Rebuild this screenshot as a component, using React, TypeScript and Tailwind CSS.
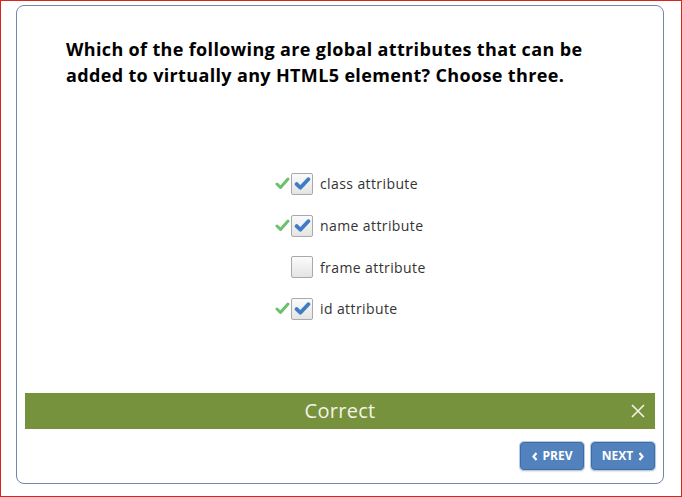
import React from 'react';

const options = [
  { label: 'class attribute', checked: true },
  { label: 'name attribute', checked: true },
  { label: 'frame attribute', checked: false },
  { label: 'id attribute', checked: true },
];

const GreenTick = () => (
  <svg width="15" height="13" viewBox="0 0 15 13">
    <path d="M2 7 L5.5 10.5 L13 2" fill="none" stroke="#6cc16c" strokeWidth="3" strokeLinecap="round" strokeLinejoin="round" />
  </svg>
);

const BlueTick = () => (
  <svg width="17" height="15" viewBox="0 0 16 14">
    <path d="M2.5 7.5 L6 11 L13.5 3" fill="none" stroke="#3f7cc6" strokeWidth="3.6" strokeLinecap="round" strokeLinejoin="round" />
  </svg>
);

const OptionRow: React.FC<{ label: string; checked: boolean }> = ({ label, checked }) => (
  <div className="flex h-[41.7px] items-center">
    <div className="flex w-[16px] justify-start">{checked && <GreenTick />}</div>
    <div className="flex h-[22px] w-[22px] items-center justify-center rounded-[2px] border border-[#a9a9a9] bg-gradient-to-b from-[#fbfbfb] to-[#e4e4e4]">
      {checked && <BlueTick />}
    </div>
    <span className="ml-[7px] text-[14px] tracking-[0.4px] text-[#333]">{label}</span>
  </div>
);

const NavButton: React.FC<{ children: React.ReactNode }> = ({ children }) => (
  <button className="flex h-[28px] w-[64px] items-center justify-center gap-[5px] rounded-[4px] border border-[#3d6da6] bg-[#5282be] text-[12px] font-bold text-white shadow-[0_0_0_1px_#b9cbe2,0_1px_2px_rgba(0,0,0,0.3)]">
    {children}
  </button>
);

const Chevron = ({ dir }: { dir: 'left' | 'right' }) => (
  <svg width="6" height="9" viewBox="0 0 6 9">
    <path
      d={dir === 'left' ? 'M4.5 1 L1.5 4.5 L4.5 8' : 'M1.5 1 L4.5 4.5 L1.5 8'}
      fill="none"
      stroke="white"
      strokeWidth="2.2"
    />
  </svg>
);

export default function App() {
  return (
    <div className="h-[497px] w-[682px] border border-[#d9261c] bg-white" style={{ fontFamily: '"Open Sans", sans-serif' }}>
      <div className="ml-[15px] mt-[4px] flex h-[479px] w-[648px] flex-col rounded-[8px] border border-[#6f88aa]">
        <h1 className="pl-[49px] pt-[30px] text-[18px] font-bold leading-[26px] tracking-[0.35px] text-black">
          Which of the following are global attributes that can be
          <br />
          added to virtually any HTML5 element? Choose three.
        </h1>

        <div className="ml-[258px] mt-[75px] flex flex-col">
          {options.map((o) => (
            <OptionRow key={o.label} label={o.label} checked={o.checked} />
          ))}
        </div>

        <div className="relative mx-[8px] mt-auto flex h-[36px] items-center justify-center bg-[#76923c]">
          <span className="text-[20px] tracking-[0.3px] text-[#f3f3e6]">Correct</span>
          <svg className="absolute right-[10px] top-[11px]" width="14" height="14" viewBox="0 0 14 14">
            <path d="M1 1 L13 13 M13 1 L1 13" stroke="#f3f3e6" strokeWidth="1.6" />
          </svg>
        </div>

        <div className="mx-[8px] mb-[13px] mt-[13px] flex justify-end gap-[7px]">
          <NavButton>
            <Chevron dir="left" />
            PREV
          </NavButton>
          <NavButton>
            NEXT
            <Chevron dir="right" />
          </NavButton>
        </div>
      </div>
    </div>
  );
}
